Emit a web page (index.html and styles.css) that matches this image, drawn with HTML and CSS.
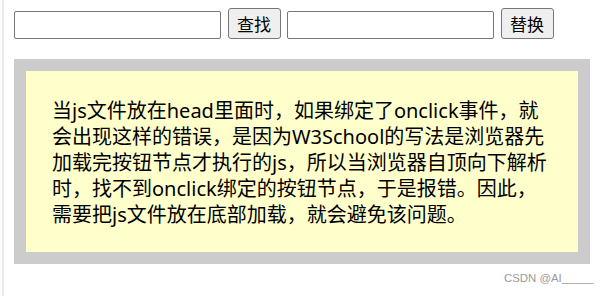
FILE: index.html
```html
<!DOCTYPE html>
<html lang="zh-CN">
<head>
<meta charset="utf-8">
<title>查找替换</title>
<link rel="stylesheet" href="styles.css">
</head>
<body>
<div class="frame">
  <div class="toolbar">
    <input class="field" type="text">
    <button class="btn" type="button">查找</button>
    <input class="field" type="text">
    <button class="btn" type="button">替换</button>
  </div>
  <div class="box">
    <p class="note">当js文件放在head里面时，如果绑定了onclick事件，就会出现这样的错误，是因为W3School的写法是浏览器先加载完按钮节点才执行的js，所以当浏览器自顶向下解析时，找不到onclick绑定的按钮节点，于是报错。因此，需要把js文件放在底部加载，就会避免该问题。</p>
  </div>
  <div class="watermark">CSDN @AI_____</div>
</div>
</body>
</html>
```

FILE: styles.css
```css
html, body {
  margin: 0;
  padding: 0;
  background: #ffffff;
}

.frame {
  position: relative;
  margin-left: 2px;
  border-left: 2px solid #ebebeb;
  height: 296px;
  box-sizing: border-box;
  padding: 8px 0 0 10px;
}

.toolbar {
  display: flex;
  align-items: flex-end;
  gap: 6.5px;
  height: 31px;
}

.field {
  box-sizing: border-box;
  width: 207px;
  height: 28px;
  margin: 0;
  padding: 2px 4px;
  border: 1px solid #767676;
  border-radius: 2px;
  background: #ffffff;
}

.btn {
  box-sizing: border-box;
  width: 53px;
  height: 31px;
  margin: 0;
  padding: 0;
  border: 1px solid #767676;
  border-radius: 3px;
  background: #efefef;
  color: #000000;
  font-family: "Noto Sans CJK SC", sans-serif;
  font-size: 17px;
  line-height: 1;
}

.box {
  box-sizing: border-box;
  width: 576px;
  margin-top: 20px;
  border: 12px solid #cccccc;
  background: #ffffcc;
  padding: 27px 26px 24px 26px;
}

.note {
  margin: 0;
  color: #000000;
  font-family: "Noto Sans", "Noto Sans CJK SC", sans-serif;
  font-size: 20px;
  line-height: 26px;
}

.watermark {
  position: absolute;
  left: 500px;
  top: 272px;
  font-family: "Liberation Sans", sans-serif;
  font-size: 11.4px;
  line-height: 12px;
  color: #9a9a9a;
}
```
